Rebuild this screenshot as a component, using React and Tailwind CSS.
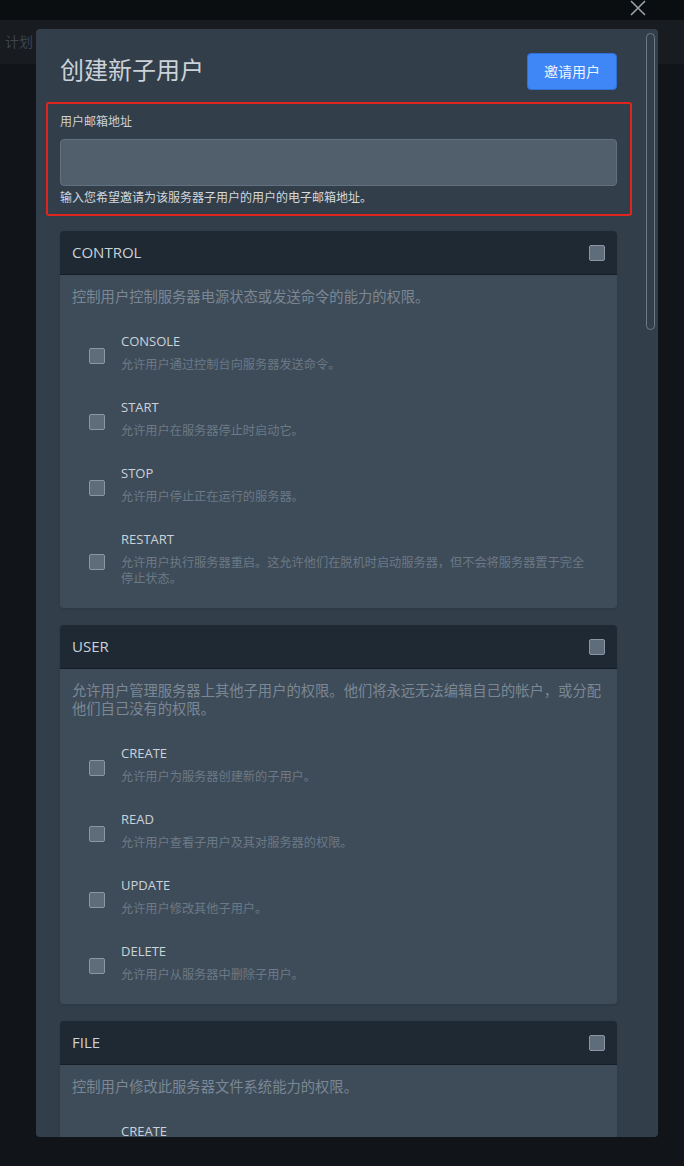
import React from "react";

const sections = [
  {
    title: "CONTROL",
    desc: "控制用户控制服务器电源状态或发送命令的能力的权限。",
    items: [
      { name: "CONSOLE", desc: "允许用户通过控制台向服务器发送命令。" },
      { name: "START", desc: "允许用户在服务器停止时启动它。" },
      { name: "STOP", desc: "允许用户停止正在运行的服务器。" },
      {
        name: "RESTART",
        desc: "允许用户执行服务器重启。这允许他们在脱机时启动服务器，但不会将服务器置于完全停止状态。",
      },
    ],
  },
  {
    title: "USER",
    desc: "允许用户管理服务器上其他子用户的权限。他们将永远无法编辑自己的帐户，或分配他们自己没有的权限。",
    items: [
      { name: "CREATE", desc: "允许用户为服务器创建新的子用户。" },
      { name: "READ", desc: "允许用户查看子用户及其对服务器的权限。" },
      { name: "UPDATE", desc: "允许用户修改其他子用户。" },
      { name: "DELETE", desc: "允许用户从服务器中删除子用户。" },
    ],
  },
  {
    title: "FILE",
    desc: "控制用户修改此服务器文件系统能力的权限。",
    items: [
      { name: "CREATE", desc: "允许用户在服务器上创建新文件和目录。" },
      { name: "READ", desc: "允许用户查看目录内容以及文件内容。" },
    ],
  },
];

const Checkbox = ({ className = "" }) => (
  <div
    className={
      "w-4 h-4 shrink-0 rounded-[2px] bg-[#5f6c79] border border-[#8b96a2] " +
      className
    }
  />
);

const Section = ({ s }) => (
  <div className="mb-[17px] rounded shadow-sm">
    <div className="h-[44px] px-3 flex items-center justify-between bg-[#1f2933] rounded-t border-b border-[#161d24]">
      <span className="text-[15px] text-[#cbd2d9]">{s.title}</span>
      <Checkbox />
    </div>
    <div className="bg-[#3e4c59] rounded-b px-3 pt-[13px] pb-[9px]">
      <p className="text-[14.3px] leading-[18px] text-[#7b8794] mb-[13px]">
        {s.desc}
      </p>
      {s.items.map((it, i) => (
        <div key={i} className="flex items-center px-[17px] py-3">
          <Checkbox className="mt-2" />
          <div className="ml-4 flex-1">
            <div className="text-[13px] leading-5 text-[#cbd2d9]">{it.name}</div>
            <div className="mt-1.5 text-[12.2px] leading-4 text-[#6c7986]">
              {it.desc}
            </div>
          </div>
        </div>
      ))}
    </div>
  </div>
);

export default function App() {
  return (
    <div
      className="relative w-[684px] h-[1166px] overflow-hidden bg-[#111418]"
      style={{ fontFamily: '"Open Sans", "Noto Sans CJK SC", sans-serif' }}
    >
      <div className="h-5 bg-[#0b0e11]" />
      <div className="h-11 bg-[#181c21] flex items-center pl-[5px]">
        <span className="text-sm text-[#3c434b]">计划</span>
      </div>

      {/* close */}
      <svg
        className="absolute left-[629px] top-0"
        width="18"
        height="18"
        viewBox="0 0 18 18"
      >
        <path d="M2 1 L16 15 M16 1 L2 15" stroke="#9aa1a8" strokeWidth="1.6" />
      </svg>

      {/* modal */}
      <div className="absolute left-[36px] top-[29px] w-[622px] h-[1108px] bg-[#323f4b] rounded overflow-hidden pt-6 pl-6 pr-[41px]">
        <div className="absolute right-[3px] top-1 w-[9px] h-[297px] rounded-full border border-[#6d7a87]" />

        <div className="flex items-center justify-between">
          <h2 className="text-[24px] text-[#cbd2d9] leading-8 pb-[3px]">创建新子用户</h2>
          <button className="w-[90px] h-[37px] rounded bg-[#3f86f7] border border-[#2f6fd6] text-[14px] text-[#eef4ff]">
            邀请用户
          </button>
        </div>

        <div className="relative mt-6 mb-[25px]">
          <div className="absolute -left-[14px] -right-[15px] -top-[12px] -bottom-[10px] border-2 border-[#e0251f] rounded-[3px]" />
          <label className="block text-[12px] leading-4 text-[#cbd2d9]">
            用户邮箱地址
          </label>
          <div className="mt-[9px] h-[47px] rounded bg-[#515f6c] border border-[#62707d]" />
          <p className="mt-1 text-[12px] leading-4 text-[#d3d9df]">
            输入您希望邀请为该服务器子用户的用户的电子邮箱地址。
          </p>
        </div>

        {sections.map((s) => (
          <Section key={s.title} s={s} />
        ))}
      </div>
    </div>
  );
}
